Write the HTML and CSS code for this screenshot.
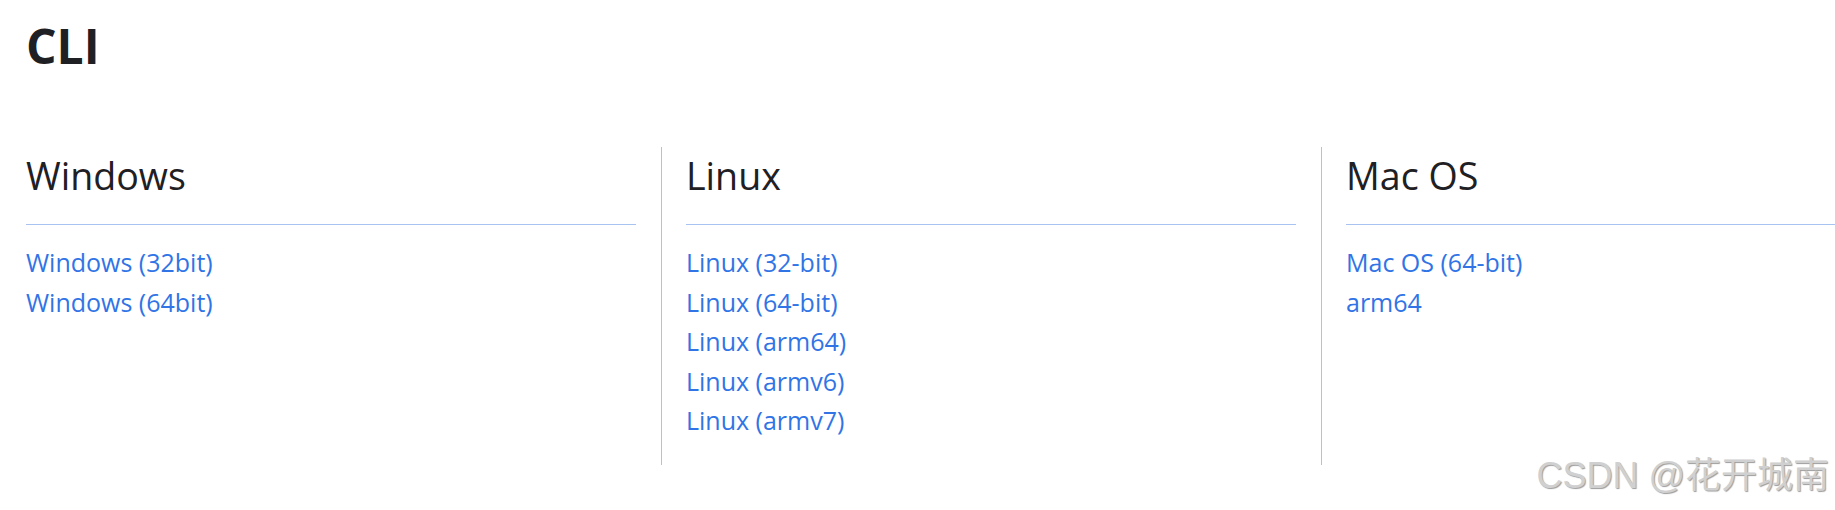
FILE: index.html
```html
<!DOCTYPE html>
<html lang="en">
<head>
<meta charset="utf-8">
<title>CLI</title>
<link rel="stylesheet" href="styles.css">
</head>
<body>
<main class="page">
  <h1 class="title">CLI</h1>
  <div class="row">
    <section class="col">
      <h3 class="col-title">Windows</h3>
      <ul class="links">
        <li><a href="#">Windows (32bit)</a></li>
        <li><a href="#">Windows (64bit)</a></li>
      </ul>
    </section>
    <section class="col">
      <h3 class="col-title">Linux</h3>
      <ul class="links">
        <li><a href="#">Linux (32-bit)</a></li>
        <li><a href="#">Linux (64-bit)</a></li>
        <li><a href="#">Linux (arm64)</a></li>
        <li><a href="#">Linux (armv6)</a></li>
        <li><a href="#">Linux (armv7)</a></li>
      </ul>
    </section>
    <section class="col">
      <h3 class="col-title">Mac OS</h3>
      <ul class="links">
        <li><a href="#">Mac OS (64-bit)</a></li>
        <li><a href="#">arm64</a></li>
      </ul>
    </section>
  </div>
</main>
<div class="watermark">CSDN @花开城南</div>
</body>
</html>
```

FILE: styles.css
```css
html, body {
  margin: 0;
  padding: 0;
  overflow: hidden;
  background: #ffffff;
}

body {
  font-family: "Open Sans", "Noto Sans", "Noto Sans CJK SC", sans-serif;
  color: #1f2023;
  width: 1835px;
  height: 510px;
  position: relative;
}

.page {
  padding-left: 1px;
}

.title {
  margin: 0 0 0 25px;
  padding-top: 15px;
  font-size: 48px;
  line-height: 61px;
  font-weight: 700;
}

.row {
  display: flex;
  margin-top: 71px;
  height: 318px;
}

.col {
  flex: none;
  width: 660px;
  box-sizing: border-box;
  border-left: 1px solid #a8c3ef;
  padding: 0 25px 0 24px;
}

.col:first-child {
  border-left-color: transparent;
}

.col:last-child {
  flex: 1;
  width: auto;
  padding-right: 0;
}

.col-title {
  margin: 0;
  padding: 5px 0 25px;
  font-size: 37.6px;
  line-height: 47px;
  font-weight: 400;
  border-bottom: 1px solid #a8c3ef;
}

.links {
  list-style: none;
  margin: 18px 0 0;
  padding: 0;
  font-size: 25px;
  line-height: 39.5px;
}

.links a {
  color: #3074e6;
  text-decoration: none;
}

.watermark {
  position: absolute;
  right: 6px;
  bottom: 12px;
  font-family: "Liberation Sans", "Noto Sans CJK SC", sans-serif;
  font-size: 36px;
  color: #d0d0d0;
  text-shadow: 1px 1px 1px #9c9c9c, -1px -1px 0 #ffffff;
}
```
